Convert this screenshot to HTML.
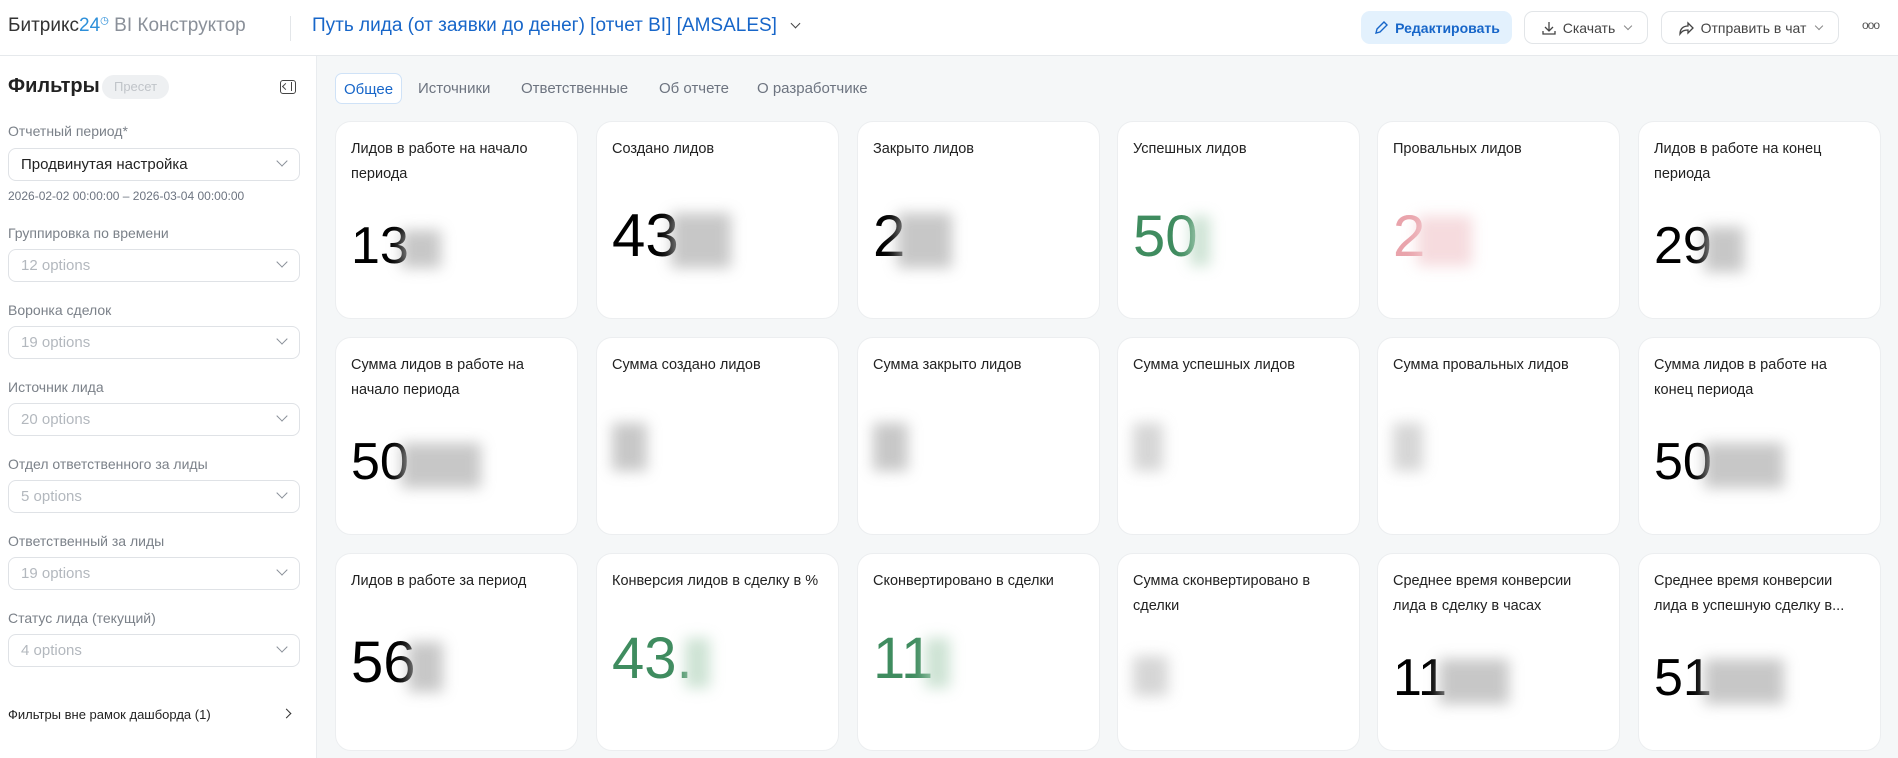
<!DOCTYPE html>
<html><head><meta charset="utf-8"><style>
*{box-sizing:border-box;margin:0;padding:0}
body{width:1898px;height:758px;overflow:hidden;background:#f5f7f8;font-family:"Liberation Sans","Noto Sans CJK SC",sans-serif;position:relative;color:#1f1f1f}
.abs{position:absolute}
.hdr{left:0;top:0;width:1898px;height:56px;background:#fff;border-bottom:1px solid #e6e9ec}
.side{left:0;top:56px;width:317px;height:702px;background:#fff;border-right:1px solid #e9ecef}
.lbl{left:8px;font-size:14px;color:#7b8189;white-space:nowrap}
.sel{left:8px;width:292px;height:33px;border:1px solid #dfe2e6;border-radius:8px;font-size:15px;color:#b3b8be;padding:7px 12px;white-space:nowrap}
.sel .ch{position:absolute;right:13px;top:8px;width:8px;height:8px;border-right:1.3px solid #8a9099;border-bottom:1.3px solid #8a9099;transform:rotate(45deg)}
.card{width:243px;height:198px;background:#fff;border-radius:16px;border:1px solid #eceef0}
.t{position:absolute;left:15px;top:15px;right:12px;font-size:14.5px;line-height:25px;color:#222}
.n{position:absolute;left:15px;line-height:1;white-space:nowrap;color:#000}
.b{display:inline-block;background:#b5b5b5;filter:blur(7px);vertical-align:middle;opacity:.75;margin-left:-8px}
.btn{top:11px;height:33px;border-radius:9px;font-size:14px;display:flex;align-items:center;justify-content:center;gap:6px}
.cv{display:inline-block;width:6px;height:6px;border-right:1.2px solid #888;border-bottom:1.2px solid #888;transform:rotate(45deg);margin:0 0 3px 4px}
.tab{top:73px;height:31px;font-size:15px;color:#6d7480;line-height:31px}
</style></head><body>
<div class="abs hdr"></div>
<div class="abs" style="left:8px;top:15px;font-size:19px;color:#333;white-space:nowrap">Битрикс<span style="color:#2d8fd9">24</span><sup style="font-size:10px;color:#2d8fd9">◷</sup> <span style="color:#8a9099">BI Конструктор</span></div>
<div class="abs" style="left:290px;top:16px;width:1px;height:25px;background:#e3e6e9"></div>
<div class="abs" style="left:312px;top:15px;font-size:19px;color:#1766c9;white-space:nowrap">Путь лида (от заявки до денег) [отчет BI] [AMSALES] <span style="display:inline-block;width:7px;height:7px;border-right:1.5px solid #444;border-bottom:1.5px solid #444;transform:rotate(45deg);margin:0 0 4px 10px"></span></div>
<div class="abs btn" style="left:1361px;width:151px;background:#e3f1fd;color:#1766c9;font-weight:bold">
<svg width="16" height="16" viewBox="0 0 16 16"><path d="M3 13l1-4 7-7 3 3-7 7z" fill="none" stroke="#1766c9" stroke-width="1.4"/></svg>Редактировать</div>
<div class="abs btn" style="left:1524px;width:124px;border:1px solid #e2e5e8;color:#444">
<svg width="16" height="16" viewBox="0 0 16 16"><path d="M8 2v9M4 7l4 4 4-4M2 11v3h12v-3" fill="none" stroke="#444" stroke-width="1.3"/></svg>Скачать<span class="cv"></span></div>
<div class="abs btn" style="left:1661px;width:178px;border:1px solid #e2e5e8;color:#444">
<svg width="17" height="16" viewBox="0 0 17 16"><path d="M10 3l5 5-5 5v-3C6 10 4 11 2 14c0-5 3-8 8-8z" fill="none" stroke="#444" stroke-width="1.3"/></svg>Отправить в чат<span class="cv"></span></div>
<div class="abs" style="left:1862px;top:18px;font-size:12px;color:#555;letter-spacing:-1px">ooo</div>

<div class="abs side"></div>
<div class="abs" style="left:8px;top:75px;font-size:20px;font-weight:bold;color:#222">Фильтры</div>
<div class="abs" style="left:102px;top:75px;width:67px;height:24px;border-radius:12px;background:#eef0f2;color:#c0c4c9;font-size:13px;text-align:center;line-height:24px">Пресет</div>
<div class="abs" style="left:280px;top:80px;width:16px;height:14px;border:1.5px solid #444;border-radius:3px"><div style="position:absolute;right:3px;top:1px;width:1.5px;height:9px;background:#444"></div><div style="position:absolute;left:2px;top:3px;width:5px;height:5px;border-left:1.5px solid #444;border-bottom:1.5px solid #444;transform:rotate(45deg)"></div></div>
<div class="abs lbl" style="top:123px">Отчетный период*</div>
<div class="abs sel" style="top:148px;color:#222"><span>Продвинутая настройка</span><span class="ch"></span></div>
<div class="abs lbl" style="top:189px;font-size:12px;color:#6d7480">2026-02-02 00:00:00 – 2026-03-04 00:00:00</div>
<div class="abs lbl" style="top:225px">Группировка по времени</div>
<div class="abs sel" style="top:249px">12 options<span class="ch"></span></div>
<div class="abs lbl" style="top:302px">Воронка сделок</div>
<div class="abs sel" style="top:326px">19 options<span class="ch"></span></div>
<div class="abs lbl" style="top:379px">Источник лида</div>
<div class="abs sel" style="top:403px">20 options<span class="ch"></span></div>
<div class="abs lbl" style="top:456px">Отдел ответственного за лиды</div>
<div class="abs sel" style="top:480px">5 options<span class="ch"></span></div>
<div class="abs lbl" style="top:533px">Ответственный за лиды</div>
<div class="abs sel" style="top:557px">19 options<span class="ch"></span></div>
<div class="abs lbl" style="top:610px">Статус лида (текущий)</div>
<div class="abs sel" style="top:634px">4 options<span class="ch"></span></div>
<div class="abs" style="left:8px;top:707px;font-size:13px;color:#222">Фильтры вне рамок дашборда (1)</div>
<div class="abs" style="left:283px;top:710px;width:7px;height:7px;border-right:1.4px solid #333;border-top:1.4px solid #333;transform:rotate(45deg)"></div>

<div class="abs tab" style="left:335px;width:67px;border:1px solid #cfe2f7;border-radius:7px;background:#fff;color:#1766c9;text-align:center">Общее</div>
<div class="abs tab" style="left:418px">Источники</div>
<div class="abs tab" style="left:521px">Ответственные</div>
<div class="abs tab" style="left:659px">Об отчете</div>
<div class="abs tab" style="left:757px">О разработчике</div>

<!-- row 1 -->
<div class="abs card" style="left:335px;top:121px"><div class="t">Лидов в работе на начало периода</div><div class="n" style="top:98px;font-size:52px">13<span class="b" style="width:40px;height:38px"></span></div></div>
<div class="abs card" style="left:596px;top:121px"><div class="t">Создано лидов</div><div class="n" style="top:84px;font-size:60px">43<span class="b" style="width:60px;height:55px"></span></div></div>
<div class="abs card" style="left:857px;top:121px"><div class="t">Закрыто лидов</div><div class="n" style="top:86px;font-size:58px">2<span class="b" style="width:55px;height:55px"></span></div></div>
<div class="abs card" style="left:1117px;top:121px"><div class="t">Успешных лидов</div><div class="n" style="top:86px;font-size:58px;color:#3f8c5f">50<span class="b" style="width:20px;height:50px;background:#bcd9c5"></span></div></div>
<div class="abs card" style="left:1377px;top:121px"><div class="t">Провальных лидов</div><div class="n" style="top:86px;font-size:58px;color:#e9a3ab">2<span class="b" style="width:55px;height:50px;background:#f3cfd3"></span></div></div>
<div class="abs card" style="left:1638px;top:121px"><div class="t">Лидов в работе на конец периода</div><div class="n" style="top:98px;font-size:52px">29<span class="b" style="width:40px;height:45px"></span></div></div>
<!-- row 2 -->
<div class="abs card" style="left:335px;top:337px"><div class="t">Сумма лидов в работе на начало периода</div><div class="n" style="top:98px;font-size:52px">50<span class="b" style="width:80px;height:45px"></span></div></div>
<div class="abs card" style="left:596px;top:337px"><div class="t">Сумма создано лидов</div><div class="n" style="top:85px"><span class="b" style="width:35px;height:48px;margin:0"></span></div></div>
<div class="abs card" style="left:857px;top:337px"><div class="t">Сумма закрыто лидов</div><div class="n" style="top:85px"><span class="b" style="width:35px;height:48px;margin:0"></span></div></div>
<div class="abs card" style="left:1117px;top:337px"><div class="t">Сумма успешных лидов</div><div class="n" style="top:85px"><span class="b" style="width:30px;height:48px;background:#c8c8c8;margin:0"></span></div></div>
<div class="abs card" style="left:1377px;top:337px"><div class="t">Сумма провальных лидов</div><div class="n" style="top:85px"><span class="b" style="width:30px;height:48px;background:#c8c8c8;margin:0"></span></div></div>
<div class="abs card" style="left:1638px;top:337px"><div class="t">Сумма лидов в работе на конец периода</div><div class="n" style="top:98px;font-size:52px">50<span class="b" style="width:80px;height:45px"></span></div></div>
<!-- row 3 -->
<div class="abs card" style="left:335px;top:553px"><div class="t">Лидов в работе за период</div><div class="n" style="top:80px;font-size:58px">56<span class="b" style="width:35px;height:50px"></span></div></div>
<div class="abs card" style="left:596px;top:553px"><div class="t">Конверсия лидов в сделку в %</div><div class="n" style="top:76px;font-size:58px;color:#3f8c5f">43.<span class="b" style="width:25px;height:50px;background:#bcd9c5"></span></div></div>
<div class="abs card" style="left:857px;top:553px"><div class="t">Сконвертировано в сделки</div><div class="n" style="top:76px;font-size:58px;color:#3f8c5f">11<span class="b" style="width:25px;height:50px;background:#bcd9c5"></span></div></div>
<div class="abs card" style="left:1117px;top:553px"><div class="t">Сумма сконвертировано в сделки</div><div class="n" style="top:102px"><span class="b" style="width:35px;height:40px;background:#c8c8c8;margin:0"></span></div></div>
<div class="abs card" style="left:1377px;top:553px"><div class="t">Среднее время конверсии лида в сделку в часах</div><div class="n" style="top:98px;font-size:52px">11<span class="b" style="width:70px;height:45px"></span></div></div>
<div class="abs card" style="left:1638px;top:553px"><div class="t">Среднее время конверсии лида в успешную сделку в...</div><div class="n" style="top:98px;font-size:52px">51<span class="b" style="width:80px;height:45px"></span></div></div>
</body></html>
